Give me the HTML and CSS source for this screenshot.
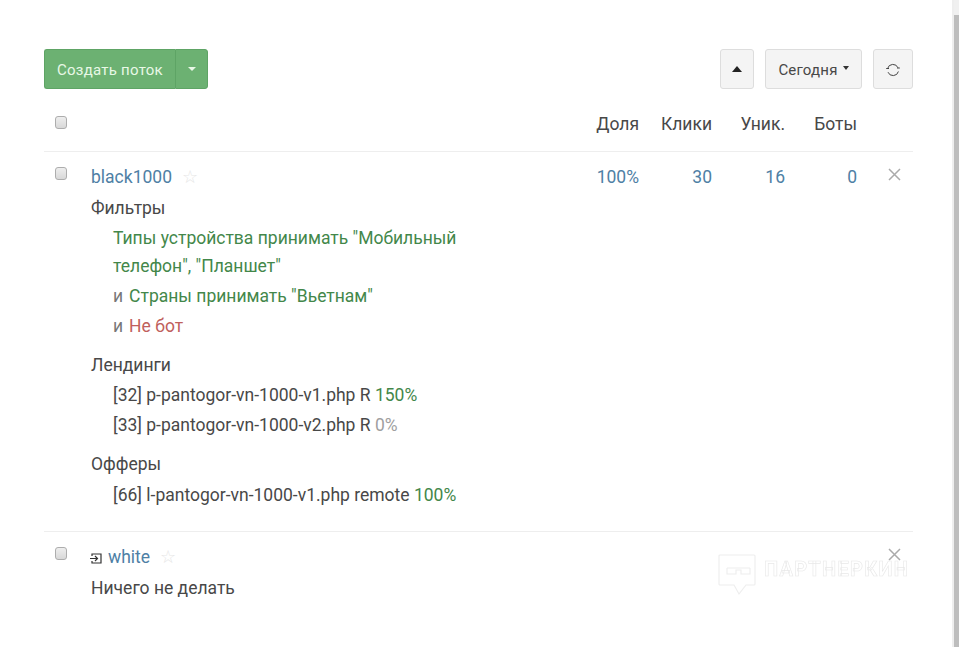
FILE: index.html
```html
<!DOCTYPE html>
<html lang="ru">
<head>
<meta charset="utf-8">
<title>Потоки</title>
<link rel="stylesheet" href="styles.css">
</head>
<body>
<div class="scrollbar"><div class="scroll-arrow"></div><div class="scroll-thumb"></div></div>
<main class="page">
  <div class="toolbar">
    <div class="btn-group">
      <button class="btn btn-success btn-main">Создать поток</button>
      <button class="btn btn-success btn-split"><span class="caret"></span></button>
    </div>
    <div class="tools">
      <button class="btn btn-default btn-up"><span class="caret-up"></span></button>
      <button class="btn btn-default btn-date">Сегодня<span class="caret dark"></span></button>
      <button class="btn btn-default btn-refresh">
        <svg width="16" height="14" viewBox="0 0 16 14" fill="none" stroke="#444" stroke-width="1"><path d="M2.6 5.5A5.5 5.5 0 0 1 13 4.8"/><path d="M13.4 8.5A5.5 5.5 0 0 1 3 9.2"/><path d="M1.2 5.5h2.8M12 5h2.8"/></svg>
      </button>
    </div>
  </div>

  <div class="row head">
    <div class="check"><span class="cb"></span></div>
    <div class="main"></div>
    <div class="num share">Доля</div>
    <div class="num clicks">Клики</div>
    <div class="num uniq">Уник.</div>
    <div class="num bots">Боты</div>
    <div class="close"></div>
  </div>

  <div class="row stream">
    <div class="check"><span class="cb"></span></div>
    <div class="main">
      <div class="title"><a class="link">black1000</a><span class="star">☆</span></div>
      <div class="section first">Фильтры</div>
      <div class="list filters">
        <div class="item g">Типы устройства принимать "Мобильный телефон", "Планшет"</div>
        <div class="item"><span class="and">и</span><span class="g">Страны принимать "Вьетнам"</span></div>
        <div class="item"><span class="and">и</span><span class="r">Не бот</span></div>
      </div>
      <div class="section">Лендинги</div>
      <div class="list">
        <div class="item">[32] p-pantogor-vn-1000-v1.php R <span class="g">150%</span></div>
        <div class="item">[33] p-pantogor-vn-1000-v2.php R <span class="mute">0%</span></div>
      </div>
      <div class="section">Офферы</div>
      <div class="list offers">
        <div class="item">[66] l-pantogor-vn-1000-v1.php remote <span class="g">100%</span></div>
      </div>
    </div>
    <div class="num share link">100%</div>
    <div class="num clicks link">30</div>
    <div class="num uniq link">16</div>
    <div class="num bots link">0</div>
    <div class="close"><svg width="13" height="13" viewBox="0 0 13 13" stroke="#aaa" stroke-width="1.5"><path d="M1 1l11 11M12 1L1 12"/></svg></div>
  </div>

  <div class="row stream last">
    <div class="check"><span class="cb"></span></div>
    <div class="main">
      <div class="title"><svg class="enter" width="12" height="11" viewBox="0 0 12 11" fill="none" stroke="#333" stroke-width="1.2"><path d="M2 3V1h9v9H2V8"/><path d="M0 5.5h7M5 3l2.5 2.5L5 8"/></svg><a class="link">white</a><span class="star">☆</span></div>
      <div class="section first">Ничего не делать</div>
    </div>
    <div class="close"><svg width="13" height="13" viewBox="0 0 13 13" stroke="#aaa" stroke-width="1.5"><path d="M1 1l11 11M12 1L1 12"/></svg></div>
  </div>
</main>
<div class="watermark">
  <svg width="38" height="42" viewBox="0 0 38 42" fill="#fff" stroke="#eee" stroke-width="1.2"><path d="M2 1h34a1 1 0 0 1 1 1v28a1 1 0 0 1-1 1H28l-7 9-5-9H2a1 1 0 0 1-1-1V2a1 1 0 0 1 1-1z"/><path d="M9 14h23M9 14v6h9v-4h5v4h9v-6"/></svg>
  <span class="wm-text">ПАРТНЕРКИН</span>
</div>
</body>
</html>
```

FILE: styles.css
```css
* { box-sizing: border-box; }
html, body { margin: 0; height: 100%; overflow: hidden; background: #fff; }
body { font-family: Roboto, "Noto Sans", sans-serif; font-size: 17.5px; line-height: 30px; color: #484848; }
.page { width: 869px; margin-left: 44px; padding-top: 49px; }
button { font: inherit; }
.toolbar { display: flex; justify-content: space-between; height: 40px; }
.btn { height: 40px; border-radius: 3px; line-height: 38px; padding: 0; cursor: pointer; }
.btn-group { display: flex; }
.btn-success { background: #6cb172; border: 1px solid #5ea465; color: #e8f8e6; font-size: 15px; }
.btn-main { width: 131px; border-radius: 3px 0 0 3px; border-right: 0; letter-spacing: .25px; padding-top: 1px; }
.btn-split { width: 33px; border-radius: 0 3px 3px 0; display: flex; align-items: center; justify-content: center; }
.caret { display: inline-block; border-top: 4px solid #e8f8e6; border-left: 4px solid transparent; border-right: 4px solid transparent; }
.caret.dark { border-top-color: #333; margin-left: 5px; margin-bottom: 3px; border-left-width: 3.5px; border-right-width: 3.5px; }
.caret-up { display: inline-block; border-bottom: 6px solid #222; border-left: 5px solid transparent; border-right: 5px solid transparent; }
.tools { display: flex; gap: 11px; }
.btn-default { background: #f4f4f4; border: 1px solid #ddd; color: #484848; font-size: 15px; display: flex; align-items: center; justify-content: center; }
.btn-up { width: 34px; }
.btn-date { width: 97px; letter-spacing: .2px; padding-top: 1px; }
.btn-refresh { width: 40px; padding-top: 1px; }
.row { display: flex; align-items: flex-start; }
.head { padding-top: 20px; border-bottom: 1px solid #eee; height: 63px; }
.head .cb { margin-top: 7px; }
.stream { border-bottom: 1px solid #eee; padding-top: 10px; height: 380px; }
.stream.last { border-bottom: 0; height: 80px; }
.check { width: 47px; padding-left: 11px; }
.cb { display: block; width: 12px; height: 13px; margin-top: 5px; border: 1px solid #adadad; border-radius: 3px; background: linear-gradient(#eee, #d8d8d8); }
.main { flex: 1; min-width: 0; }
.main .title { height: 30px; }
.link { color: #4e80a5; }
.star { color: #e6e6e6; margin-left: 10px; font-size: 18px; }
.enter { margin-left: -1px; margin-right: 6px; vertical-align: -1px; }
.section { margin-top: 9px; }
.section.first { margin-top: 1px; }
.list { padding-left: 22px; }
.filters { width: 394px; margin-top: 1px; margin-bottom: 10px; line-height: 28px; }
.filters .item { margin-bottom: 2px; }
.offers { margin-top: 1px; }
.g { color: #43874a; }
.r { color: #c0605c; }
.mute { color: #a0a0a0; }
.and { color: #777; margin-right: 6px; }
.num { text-align: right; height: 30px; }
.share { width: 48px; }
.clicks { width: 73px; }
.uniq { width: 73px; }
.bots { width: 72px; }
.close { width: 56px; padding-left: 31px; height: 30px; }
.close svg { display: block; margin-top: 6px; }
.scrollbar { position: fixed; right: 0; top: 0; bottom: 0; width: 7px; background: #bdbdbd; border-left: 2px solid #eee; }
.scroll-arrow { height: 15px; background: #f0f0f0; }
.watermark { position: fixed; left: 718px; top: 554px; display: flex; gap: 8px; align-items: flex-start; }
.wm-text { font-size: 20px; line-height: 30px; color: #fff; -webkit-text-stroke: 0.6px #e8e8e8; letter-spacing: 1.3px; font-weight: 700; }
```
